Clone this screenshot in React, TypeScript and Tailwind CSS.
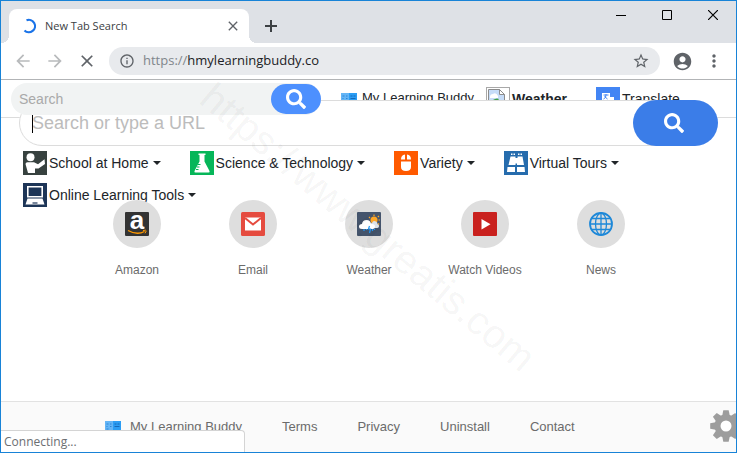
import type { ReactNode } from "react";
import { FaSearch } from "react-icons/fa";
import {
  MdAccountCircle,
  MdArrowBack,
  MdArrowForward,
  MdClose,
  MdInfoOutline,
  MdMoreVert,
  MdStarBorder,
} from "react-icons/md";

function TeacherIcon() {
  return (
    <svg viewBox="0 0 24 24" className="size-6 shrink-0" aria-hidden="true">
      <rect width="24" height="24" fill="#37413f" />
      <circle cx="7.500" cy="6.300" r="4" fill="#fff" />
      <path d="M2.500 13q0-1.800 2-1.800H11l4 2 6.500-5 .5 4.800-6.500 4.500H12v4.500H5z" fill="#fff" />
    </svg>
  );
}

function FlaskIcon() {
  return (
    <svg viewBox="0 0 24 24" className="size-6 shrink-0" aria-hidden="true">
      <rect width="24" height="24" fill="#06b659" />
      <path d="M8.500 2.500h7V4h-1v6.500L19.500 20q.5 1.500-1 1.500h-13q-1.500 0-1-1.500l5-9.500V4h-1z" fill="#fff" />
      <path d="M8 13.500h2.500M7 16h2.500M6 18.500h2.500" stroke="#06b659" strokeWidth="1" />
    </svg>
  );
}

function MouseIcon() {
  return (
    <svg viewBox="0 0 24 24" className="size-6 shrink-0" aria-hidden="true">
      <rect width="24" height="24" fill="#ff5a00" />
      <path d="M7 8.500q0-4.500 4-5v5zM17 8.500q0-4.500-4-5v5zM7 10.500h10V16q0 4-5 4t-5-4z" fill="#fff" />
    </svg>
  );
}

function BinocularsIcon() {
  return (
    <svg viewBox="0 0 24 24" className="size-6 shrink-0" aria-hidden="true">
      <rect width="24" height="24" fill="#266cad" />
      <path d="M7 2.500h1.500V4H7zM9.500 2.500H11V4H9.500zM14 2.500h1.500V4H14zM16.500 2.500H18V4h-1.500z" fill="#fff" />
      <path d="M6.500 5.500h5v1.500h2V5.500h5L20 14h-7v-1.500h-1.500V14H4.500zM3.500 16H11v5H3zM13 16h7.500l.5 5h-8z" fill="#fff" />
    </svg>
  );
}

function LaptopIcon() {
  return (
    <svg viewBox="0 0 24 24" className="size-6 shrink-0" aria-hidden="true">
      <rect width="24" height="24" fill="#1d3557" />
      <path d="M4.800 3.800h14.400v10H4.800z" fill="none" stroke="#fff" strokeWidth="1.600" />
      <path d="M4.500 15.500h15l2 6h-19z" fill="#fff" />
      <path d="M9.500 20h5" stroke="#1d3557" strokeWidth="1.200" />
    </svg>
  );
}

function BookIcon() {
  return (
    <svg viewBox="0 0 16 12" className="h-3 w-4 shrink-0" aria-hidden="true">
      <rect width="8" height="11" fill="#64b5f6" />
      <rect x="8" width="8" height="11" fill="#2b9df4" />
      <path d="M1.500 3h2M1.500 5.500h1M1.500 8h2M5 3h1.500M5 5.500h1.500" stroke="#2f86d6" />
      <path d="M9.500 3h2M12.500 3h2M9.500 5.500h5" stroke="#1568b8" />
    </svg>
  );
}

function BrokenImageIcon() {
  return (
    <svg viewBox="0 0 24 24" className="size-6 shrink-0" aria-hidden="true">
      <rect x=".5" y=".5" width="23" height="23" fill="#fff" stroke="#a8a8a8" />
      <path d="M2.500 2.500h11l5 5v11h-16z" fill="#c6dcf8" stroke="#8c8c8c" />
      <path d="M13.500 2.500v5h5z" fill="#fff" stroke="#8c8c8c" />
      <path d="M4 10q0-3 3-3 3-2 5 2v2H4z" fill="#fff" />
      <path d="M3 18q5-8 10-6l-5 6z" fill="#43a047" />
    </svg>
  );
}

function TranslateIcon() {
  return (
    <svg viewBox="0 0 24 24" className="size-6 shrink-0" aria-hidden="true">
      <rect width="24" height="24" fill="#4285f4" />
      <path d="M6 6h8v4h4v8h-8v-4H6z" fill="#fff" />
      <path d="M7.500 8h5M10 7v1q0 3-2.500 4M8.500 9.500l3 2.500" fill="none" stroke="#4285f4" />
    </svg>
  );
}

function AmazonIcon() {
  return (
    <svg viewBox="0 0 24 24" className="size-6 overflow-visible" aria-hidden="true">
      <rect width="24" height="24" rx="1" fill="#333" />
      <text x="12" y="17" textAnchor="middle" fill="#fff" className="font-['Liberation_Sans',Arial,sans-serif] text-[26px] font-bold">a</text>
      <path d="M3 18.500q9 5 16.500 1" fill="none" stroke="#ff9900" strokeWidth="1.300" />
      <path d="M18 18.500q3.500-.8 3.200.3t-1.200 2.500" fill="none" stroke="#ff9900" />
    </svg>
  );
}

function MailIcon() {
  return (
    <svg viewBox="0 0 24 24" className="size-6" aria-hidden="true">
      <rect width="24" height="24" rx="1.500" fill="#e54b3f" />
      <path d="M4 5.500h16v13H4z" fill="#fff" />
      <path d="M4 6l8 6.500L20 6" fill="none" stroke="#e54b3f" strokeWidth="2" />
    </svg>
  );
}

function WeatherIcon() {
  return (
    <svg viewBox="0 0 24 24" className="size-6" aria-hidden="true">
      <rect width="24" height="24" rx="1" fill="#44546c" />
      <circle cx="17" cy="8" r="3.500" fill="#ffa726" />
      <path d="M17 2.500v1.500M12 5l1 1M22 4l-1.200 1M21.500 8H23M21 11.500l1.200 1" stroke="#ffa726" strokeWidth="1.200" />
      <path d="M12 15q0-4 3-4 1-3 4-1.500 2 1 1.500 2.500 2 .5 1.500 2.500-.5 1.500-2 1.500h-8z" fill="#dce3ea" />
      <path d="M5 17q-3 0-3-2.500T5 12q.5-4 4.500-4t4.500 4q4-.5 4 2.500T15 17z" fill="#fff" />
      <path d="M7 17v2M9.500 17v1M12.500 14l-1 3h2l-1 4M15.500 17v2M17.500 17v1" fill="none" stroke="#2196f3" strokeWidth="1.200" />
    </svg>
  );
}

function VideoIcon() {
  return (
    <svg viewBox="0 0 24 24" className="size-6" aria-hidden="true">
      <rect width="24" height="24" rx="1" fill="#c9211e" />
      <path d="M8.500 7v10.500l9-5.200z" fill="#fff" />
    </svg>
  );
}

function GlobeIcon() {
  return (
    <svg viewBox="0 0 24 24" className="size-6" fill="none" stroke="#1e88d8" strokeWidth="1.300" aria-hidden="true">
      <circle cx="12" cy="12" r="11" strokeWidth="1.800" />
      <ellipse cx="12" cy="12" rx="5.500" ry="11" />
      <path d="M12 1v22M1 12h22M3 6.500h18M3 17.500h18" />
    </svg>
  );
}

function GearIcon() {
  return (
    <svg viewBox="-16 -16 32 32" className="size-8" aria-hidden="true">
      <g fill="#9d9d9d">
        {[0, 45, 90, 135].map((angle) => (
          <path key={angle} d="M-2.700-15.800h5.400L4-9V9l-1.300 6.800h-5.400L-4 9V-9z" transform={`rotate(${angle})`} />
        ))}
        <circle r="11.500" />
      </g>
      <circle r="5.500" fill="#fff" />
    </svg>
  );
}

const menus: { label: string; icon: ReactNode }[] = [
  { label: "School at Home", icon: <TeacherIcon /> },
  { label: "Science & Technology", icon: <FlaskIcon /> },
  { label: "Variety", icon: <MouseIcon /> },
  { label: "Virtual Tours", icon: <BinocularsIcon /> },
  { label: "Online Learning Tools", icon: <LaptopIcon /> },
];

const tiles: { label: string; icon: ReactNode }[] = [
  { label: "Amazon", icon: <AmazonIcon /> },
  { label: "Email", icon: <MailIcon /> },
  { label: "Weather", icon: <WeatherIcon /> },
  { label: "Watch Videos", icon: <VideoIcon /> },
  { label: "News", icon: <GlobeIcon /> },
];

function TitleBar() {
  return (
    <div className="flex h-[42px] items-start justify-between bg-[#dee1e6] pl-2">
      <div className="flex items-center self-end">
        <div className="relative flex h-[34px] w-60 items-center rounded-t-lg bg-white pr-2 pl-3">
          <span className="absolute bottom-0 -left-2 size-2 bg-[radial-gradient(circle_at_top_left,transparent_8px,white_8px)]" />
          <span className="absolute -right-2 bottom-0 size-2 bg-[radial-gradient(circle_at_top_right,transparent_8px,white_8px)]" />
          <svg viewBox="0 0 16 16" className="size-4" aria-hidden="true">
            <path d="M5.500 2.300A6.200 6.200 0 1 1 3.500 12.500" fill="none" stroke="#1a73e8" strokeWidth="2.200" />
          </svg>
          <span className="ml-2 flex-1 text-[11px] text-[#3c4043]">New Tab Search</span>
          <button type="button" aria-label="Close tab" className="text-[#5f6368]">
            <MdClose className="size-4" />
          </button>
        </div>
        <button type="button" aria-label="New tab" className="ml-2 flex size-7 items-center justify-center">
          <svg viewBox="0 0 12 12" className="size-3" aria-hidden="true">
            <path d="M6 0v12M0 6h12" stroke="#3c4043" strokeWidth="2" />
          </svg>
        </button>
      </div>
      <div className="flex">
        <button type="button" aria-label="Minimize" className="flex h-7 w-[46px] items-center justify-center">
          <svg viewBox="0 0 10 10" className="size-2.5" aria-hidden="true"><path d="M0 5.500h10" stroke="#000" /></svg>
        </button>
        <button type="button" aria-label="Maximize" className="flex h-7 w-[46px] items-center justify-center">
          <svg viewBox="0 0 10 10" className="size-2.5" aria-hidden="true"><path d="M.5.5h9v9h-9z" fill="none" stroke="#000" /></svg>
        </button>
        <button type="button" aria-label="Close" className="flex h-7 w-[46px] items-center justify-center">
          <svg viewBox="0 0 10 10" className="size-2.5" aria-hidden="true"><path d="M0 0l10 10M10 0L0 10" stroke="#000" strokeWidth="1.200" /></svg>
        </button>
      </div>
    </div>
  );
}

function Toolbar() {
  return (
    <div className="flex h-[37px] items-center border-b border-[#b2b4b6] bg-white px-1.5 text-[#5f6368]">
      <button type="button" aria-label="Back" className="flex w-8 justify-center text-[#b8babc]"><MdArrowBack className="size-5" /></button>
      <button type="button" aria-label="Forward" className="flex w-8 justify-center text-[#b8babc]"><MdArrowForward className="size-5" /></button>
      <button type="button" aria-label="Stop" className="flex w-8 justify-center"><MdClose className="size-5" /></button>
      <div className="ml-1.5 flex h-7 flex-1 items-center rounded-full bg-[#e8eaed] px-2.5">
        <MdInfoOutline className="size-4" />
        <p className="ml-2 flex-1 text-[13px] text-[#202124]">
          <span className="text-[#80868b]">https://</span>hmylearningbuddy.co
        </p>
        <button type="button" aria-label="Bookmark"><MdStarBorder className="size-[18px]" /></button>
      </div>
      <button type="button" aria-label="Profile" className="ml-2 flex w-7 justify-center"><MdAccountCircle className="size-[21px]" /></button>
      <button type="button" aria-label="Menu" className="ml-0.5 flex w-8 justify-center"><MdMoreVert className="size-5" /></button>
    </div>
  );
}

export default function App() {
  return (
    <div className="relative flex min-h-screen flex-col overflow-hidden border border-[#1883d7] bg-white font-['Open_Sans',sans-serif]">
      <TitleBar />
      <Toolbar />

      <div className="relative flex flex-1 flex-col font-['Liberation_Sans',Arial,sans-serif] text-sm text-[#212529]">
        <header className="flex h-[38px] items-center border-b border-[#dcdcdc] pl-2.5">
          <form className="relative z-20 flex h-8 w-[310px] items-center rounded-full bg-[#f1f3f3]">
            <input
              type="text"
              aria-label="Search"
              placeholder="Search"
              className="min-w-0 flex-1 pl-2 outline-none placeholder:text-[#a9a9a9]"
            />
            <button type="button" aria-label="Submit search" className="flex h-[30px] w-[50px] items-center justify-center rounded-full bg-[#4d90fe] text-white">
              <FaSearch className="size-5" />
            </button>
          </form>
          <nav className="flex items-center" aria-label="Shortcuts">
            <a href="#home" className="ml-5 flex items-center gap-[5px] text-[13px]"><BookIcon />My Learning Buddy</a>
            <a href="#weather" className="ml-3 flex items-center gap-0.5 font-bold"><BrokenImageIcon />Weather</a>
            <a href="#translate" className="ml-[29px] flex items-center gap-0.5"><TranslateIcon />Translate</a>
          </nav>
        </header>

        <main className="flex-1">
          <form className="relative z-10 mr-[18px] -mt-[18px] ml-[18px] flex h-[46px] rounded-full bg-white">
            <input
              type="text"
              aria-label="Search or type a URL"
              placeholder="Search or type a URL"
              className="-mr-11 min-w-0 flex-1 rounded-full border border-[#dcdcdc] pr-12 pl-3 text-lg outline-none placeholder:text-[#bcbcbc]"
            />
            {/* text cursor */}
            <span className="absolute top-3.5 left-[13px] h-[19px] w-px bg-black" />
            <button type="button" aria-label="Go" className="relative flex w-[85px] items-center justify-center rounded-full bg-[#3b7de8] pr-1 text-white">
              <FaSearch className="size-5" />
            </button>
          </form>

          <div className="mt-[5px] flex flex-wrap gap-x-[29px] gap-y-2 px-[22px]">
            {menus.map((menu) => (
              <button key={menu.label} type="button" aria-haspopup="menu" className="flex h-6 items-center gap-0.5">
                {menu.icon}
                <span>{menu.label}</span>
                <span className="ml-0.5 border-x-4 border-t-4 border-x-transparent border-t-[#212529]" />
              </button>
            ))}
          </div>

          <ul className="relative -mt-[7px] flex pr-4 pl-[78px] text-xs text-[#6b6b6b]">
            {tiles.map((tile) => (
              <li key={tile.label} className="w-[116px]">
                <a href={`#${tile.label}`} className="flex flex-col items-center">
                  <span className="flex size-12 items-center justify-center rounded-full bg-[#dedede]">{tile.icon}</span>
                  <span className="mt-3.5">{tile.label}</span>
                </a>
              </li>
            ))}
          </ul>
        </main>

        <footer className="flex h-[51px] items-center gap-10 overflow-hidden border-t border-[#e2e2e2] bg-[#fafafa] pl-[104px] text-[13px] text-[#6b6b6b]">
          <a href="#home" className="flex items-center gap-[9px]"><BookIcon />My Learning Buddy</a>
          <a href="#terms">Terms</a>
          <a href="#privacy">Privacy</a>
          <a href="#uninstall">Uninstall</a>
          <a href="#contact">Contact</a>
        </footer>

        <button type="button" aria-label="Settings" className="absolute -right-1.5 bottom-2.5"><GearIcon /></button>
      </div>

      <div role="status" className="absolute bottom-0 left-0 w-[244px] rounded-tr border-t border-r border-[#d4d4d4] bg-white px-[3px] text-[12px] leading-[21px] text-[#6b6e72]">
        Connecting...
      </div>

      <div className="pointer-events-none absolute inset-0 z-30 flex items-center justify-center overflow-hidden" aria-hidden="true">
        <span className="rotate-[40deg] font-['Liberation_Sans',Arial,sans-serif] text-[40px] whitespace-nowrap text-black/5">https://www.greatis.com</span>
      </div>
    </div>
  );
}
